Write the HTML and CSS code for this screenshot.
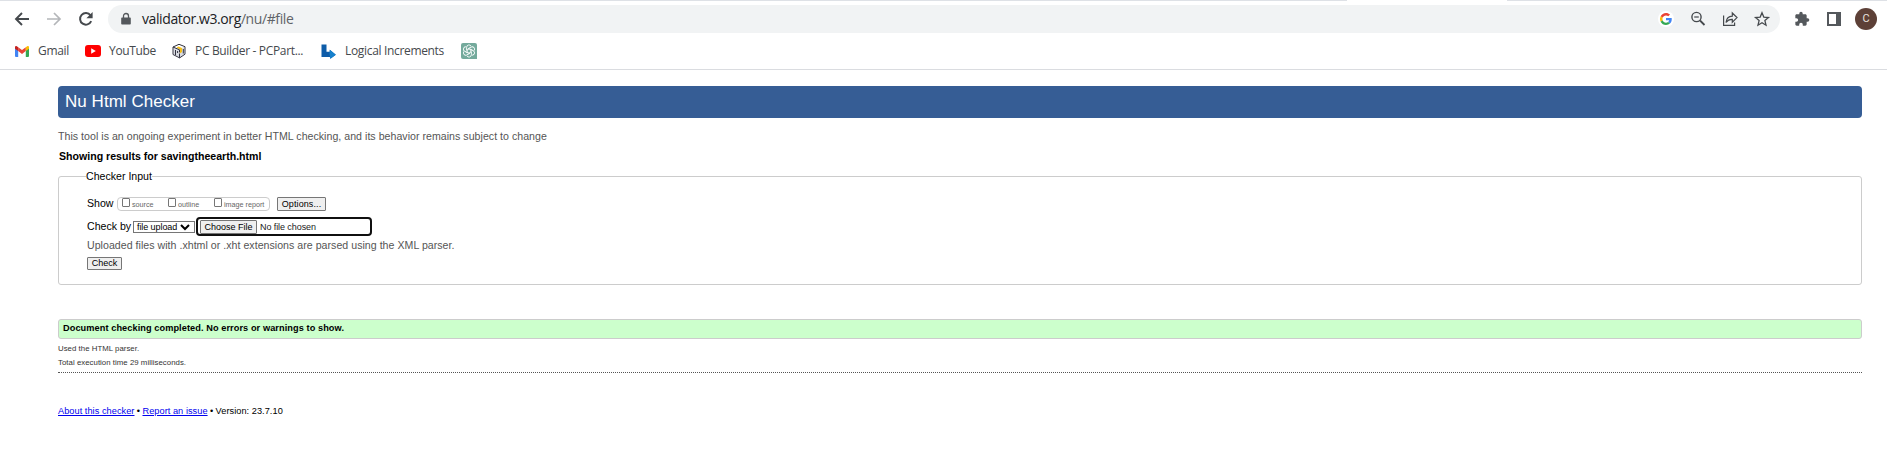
FILE: index.html
```html
<!DOCTYPE html>
<html lang="en">
<head>
<meta charset="utf-8">
<title>Nu Html Checker</title>
<link rel="stylesheet" href="styles.css">
</head>
<body>
<div class="tabs"><span class="active-tab"></span></div>
<div class="toolbar">
  <svg class="nav" viewBox="0 0 16 16"><path d="M15 8H2.5M8 2L2 8l6 6" fill="none" stroke="#45494d" stroke-width="1.9"/></svg>
  <svg class="nav" viewBox="0 0 16 16"><path d="M1 8h12.5M8 2l6 6-6 6" fill="none" stroke="#b4b6b9" stroke-width="1.7"/></svg>
  <svg class="nav" viewBox="0 0 16 16"><path d="M13.2 10.2A5.8 5.8 0 1 1 12.5 4.300" fill="none" stroke="#45494d" stroke-width="2"/><path d="M14.600 1v6.200H8.400z" fill="#45494d"/></svg>
  <div class="omnibox">
    <svg class="lock" viewBox="0 0 10 12"><path d="M1 4.500h8a.8.8 0 0 1 .8.800v5.400a.8.8 0 0 1-.8.800H1a.8.8 0 0 1-.8-.8V5.300a.8.8 0 0 1 .8-.8z" fill="#54585c"/><path d="M2.500 5V3a2.500 2.500 0 0 1 5 0v2" fill="none" stroke="#54585c" stroke-width="1.300"/></svg>
    <span class="url">validator.w3.org<span class="path">/nu/#file</span></span>
    <span class="google"><svg viewBox="0 0 48 48"><path fill="#ea4335" d="M24 9.500c3.500 0 6.700 1.200 9.200 3.600l6.900-6.900C35.900 2.400 30.500 0 24 0 14.600 0 6.500 5.400 2.600 13.200l8 6.200C12.400 13.700 17.700 9.500 24 9.500z"/><path fill="#4285f4" d="M47 24.600c0-1.600-.2-3.100-.4-4.600H24v9h12.900c-.6 3-2.200 5.500-4.700 7.200l7.700 6C44.400 38 47 31.800 47 24.600z"/><path fill="#fbbc05" d="M10.500 28.600a14.500 14.500 0 0 1 0-9.200l-8-6.200a24 24 0 0 0 0 21.600z"/><path fill="#34a853" d="M24 48c6.500 0 11.900-2.100 15.900-5.800l-7.700-6c-2.200 1.500-4.900 2.300-8.200 2.300-6.300 0-11.600-4.200-13.500-9.900l-8 6.200C6.500 42.600 14.600 48 24 48z"/></svg></span>
    <svg class="action" viewBox="0 0 16 16"><g fill="none" stroke="#45494d"><circle cx="6.500" cy="6" r="4.600" stroke-width="1.400"/><path d="M10 9.500l4.500 4.500" stroke-width="1.800"/><path d="M4.200 6h4.600" stroke-width="1.200"/></g></svg>
    <svg class="action" viewBox="0 0 16 16"><g fill="none" stroke="#45494d" stroke-width="1.200"><path d="M1.600 4.500v9.900h11v-2.800"/><path d="M4 11.500c.5-4.200 3-6.200 6.300-6.300V2l4.700 4.600-4.700 4.600V8.300C7.500 8.200 5.500 9.300 4 11.500z"/></g></svg>
    <svg class="action" viewBox="0 0 16 16"><path d="M8 1.800l1.800 4.300 4.700.4-3.600 3.100 1.100 4.600L8 11.700l-4 2.500 1.100-4.600-3.600-3.100 4.700-.4z" fill="none" stroke="#45494d" stroke-width="1.300"/></svg>
  </div>
  <svg class="ext" viewBox="0 0 24 24"><path fill="#54585c" d="M20.500 11H19V7c0-1.100-.9-2-2-2h-4V3.500a2.500 2.500 0 0 0-5 0V5H4c-1.100 0-2 .9-2 2v3.800h1.500a2.700 2.700 0 0 1 0 5.400H2V20c0 1.100.9 2 2 2h3.800v-1.500a2.700 2.700 0 0 1 5.400 0V22H17c1.100 0 2-.9 2-2v-4h1.500a2.500 2.500 0 0 0 0-5z"/></svg>
  <span class="panel"></span>
  <span class="avatar">C</span>
</div>
<div class="bookmarks">
  <svg class="gmail" viewBox="0 0 14 11"><path fill="#4285f4" d="M0 1.500L3.200 4v7H1a1 1 0 0 1-1-1z"/><path fill="#34a853" d="M14 1.500L10.800 4v7H13a1 1 0 0 0 1-1z"/><path fill="#ea4335" d="M3.200 1.300L7 4.100l3.800-2.800v3.800L7 8 3.200 5.100z"/><path fill="#c5221f" d="M0 1.600C0 0 1.500-.3 2.500.7l.7.600v3.800L0 2.800z"/><path fill="#fbbc04" d="M14 1.600c0-1.600-1.500-1.900-2.500-.9l-.7.600v3.800L14 2.800z"/></svg>
  <span class="bm bm-gmail">Gmail</span>
  <svg class="youtube" viewBox="0 0 16 12"><rect width="16" height="12" rx="3" fill="#f00"/><path d="M6.200 3.300v5.400L10.800 6z" fill="#fff"/></svg>
  <span class="bm bm-yt">YouTube</span>
  <svg class="pcpp" viewBox="0 0 16 16"><path fill="#d9dbe2" d="M8 1.500l5.500 2.100v7.300L8.600 14.500 2.500 11.300V4z"/><path fill="#fff" d="M2.500 4.200L8 1.600l5.500 2-5 3z"/><path fill="#f5c018" d="M5.500 4.500l2-1 3.500 1.600v4l-2.200 1.400V6.600z"/><g fill="none" stroke="#32323f" stroke-width="1" stroke-linejoin="round"><path d="M8 1.300l6 2.400v7.500L8.600 14.900 2 11.500V4z"/><path d="M8.500 10.500v4.400M2 4l6.500 2.800v2.500M4.500 7v5M6.600 8v2M12.300 6v4.500"/></g></svg>
  <span class="bm bm-pc">PC Builder - PCPart...</span>
  <svg class="logical" viewBox="0 0 15 15"><path d="M.5.500h5v7.300h3.300V5.700l6 5-5.400 4-.6-1.700H.5z" fill="#0d5ca8"/><path d="M8.800 5.700l6 5-5.400 4-.9-5z" fill="#1680cc"/></svg>
  <span class="bm bm-li">Logical Increments</span>
  <svg class="gpt" viewBox="0 0 16 16"><path d="M2 0h12a2 2 0 0 1 2 2v14H2a2 2 0 0 1-2-2V2a2 2 0 0 1 2-2z" fill="#74aa9c"/><g fill="none" stroke="#fff" stroke-width=".9"><path id="petal" d="M8 5.900L5.600 7.200V4.300a2.400 2.400 0 0 1 4.500-1.100"/><use href="#petal" transform="rotate(60 8 8)"/><use href="#petal" transform="rotate(120 8 8)"/><use href="#petal" transform="rotate(180 8 8)"/><use href="#petal" transform="rotate(240 8 8)"/><use href="#petal" transform="rotate(300 8 8)"/></g></svg>
</div>
<main class="page">
  <h1 class="banner"><span>Nu Html Checker</span></h1>
  <p class="intro">This tool is an ongoing experiment in better HTML checking, and its behavior remains subject to change</p>
  <h2 class="results">Showing results for savingtheearth.html</h2>
  <section class="input-box">
    <div class="legend"><span>Checker Input</span></div>
    <div class="show-row">
      <span class="show-label">Show</span>
      <span class="checks">
        <label class="check"><i class="tick"></i><span>source</span></label>
        <label class="check"><i class="tick"></i><span>outline</span></label>
        <label class="check"><i class="tick"></i><span>image report</span></label>
      </span>
      <button class="btn options">Options...</button>
    </div>
    <div class="by-row">
      <span class="by-label">Check by</span>
      <span class="select">file upload<svg viewBox="0 0 10 6"><path d="M1 1l4 4 4-4" fill="none" stroke="#000" stroke-width="2"/></svg></span>
      <span class="file"><button class="btn choose">Choose File</button><span class="none">No file chosen</span></span>
    </div>
    <p class="hint">Uploaded files with .xhtml or .xht extensions are parsed using the XML parser.</p>
    <button class="btn submit">Check</button>
  </section>
  <div class="success"><span>Document checking completed. No errors or warnings to show.</span></div>
  <p class="stat used">Used the HTML parser.</p>
  <p class="stat time">Total execution time 29 milliseconds.</p>
  <hr class="rule">
  <footer class="foot"><a class="about" href="#">About this checker</a><span class="dot">•</span><a class="report" href="#">Report an issue</a><span class="dot">•</span><span>Version: 23.7.10</span></footer>
</main>
</body>
</html>
```
FILE: styles.css
```css
* { box-sizing: border-box; }
body { margin: 0; background: #fff; color: #000; font-family: "Liberation Sans", Arial, sans-serif; overflow: hidden; }
svg { display: block; flex: none; overflow: visible; }
p, h1, h2 { margin: 0; white-space: nowrap; }

.tabs { height: 1px; background: #dee1e6; padding-left: 1347px; }
.active-tab { display: block; width: 160px; height: 1px; background: #fff; }
.toolbar { height: 36px; display: flex; align-items: center; padding: 0 10px 0 14px; }
.nav { width: 16px; height: 16px; margin-right: 16px; }
.omnibox { width: 1672px; height: 28px; margin-left: -2px; border-radius: 14px; background: #f1f3f4; display: flex; align-items: center; padding: 0 10px 0 13px; }
.lock { width: 10px; height: 12px; margin-right: 11px; }
.url { font: 14px/20px "Open Sans", sans-serif; letter-spacing: -0.4px; color: #202124; white-space: nowrap; }
.path { color: #5f6368; }
.google { width: 16px; height: 16px; margin-left: auto; border-radius: 50%; background: #fff; display: flex; align-items: center; justify-content: center; }
.google svg { width: 12px; height: 12px; }
.action { width: 16px; height: 16px; margin-left: 16px; }
.ext { width: 16px; height: 16px; margin-left: 14px; }
.panel { width: 14px; height: 14px; margin-left: 17px; border: 2px solid #54585c; border-right-width: 5px; }
.avatar { width: 22px; height: 22px; margin-left: 14px; border-radius: 50%; background: #5d4037; color: #e8e0dd; font: 11px/22px Roboto, sans-serif; text-align: center; }
.bookmarks { height: 33px; border-bottom: 1px solid #dadce0; display: flex; align-items: center; padding: 0 0 4px 15px; }
.bm { font: 12px/18px "Open Sans", sans-serif; letter-spacing: -0.33px; color: #45494d; white-space: nowrap; }
.gmail { width: 14px; height: 11px; margin-right: 9px; }
.bm-gmail { width: 47px; }
.youtube { width: 16px; height: 12px; margin-right: 8px; }
.bm-yt { width: 62px; }
.pcpp { width: 16px; height: 16px; margin-right: 8px; }
.bm-pc { width: 126px; }
.logical { width: 15px; height: 15px; margin-right: 9px; }
.bm-li { width: 116px; }
.gpt { width: 16px; height: 16px; }

.page { padding: 16px 25px 0 58px; }
.banner { height: 32px; border-radius: 4px; background: #365d95; color: #fff; font-size: 17px; font-weight: 400; line-height: 31px; padding-left: 7px; letter-spacing: 0.04px; }
.intro { height: 20px; margin-top: 8px; line-height: 20px; font-size: 10.6px; letter-spacing: 0.028px; color: #555; }
.results { height: 20px; line-height: 20px; font-size: 10.6px; padding-left: 1px; }
.input-box { height: 109px; margin-top: 10px; border: 1px solid #ccc; border-radius: 3px; padding-left: 28px; }
.legend { height: 14px; margin-top: -8px; line-height: 14px; font-size: 10.6px; }
.legend span { display: inline-block; background: #fff; margin-left: -1px; }
.show-row { height: 14px; margin-top: 14px; display: flex; align-items: center; }
.show-label { width: 30px; font-size: 10.6px; line-height: 14px; margin-top: -2px; }
.checks { width: 153px; height: 14px; border: 1px solid #ccc; border-radius: 4px; display: flex; padding-left: 4px; font-size: 7.2px; color: #666; }
.check { width: 46px; height: 12px; flex: none; display: flex; white-space: nowrap; }
.check span { line-height: 14px; margin-left: 2px; }
.tick { width: 8px; height: 9px; border: 1px solid #767676; border-radius: 1px; background: #fff; flex: none; }
.btn { border: 1px solid #767676; border-radius: 1px; background: #efefef; color: #000; padding: 0; font-family: "Liberation Sans", Arial, sans-serif; font-size: 9px; white-space: nowrap; display: block; text-align: center; }
.options { width: 49px; height: 14px; margin-left: 7px; line-height: 12px; letter-spacing: 0.1px; }
.by-row { height: 19px; margin-top: 6px; display: flex; align-items: center; }
.by-label { width: 46px; font-size: 10.6px; line-height: 14px; margin-top: -2px; white-space: nowrap; }
.select { width: 62px; height: 12px; border: 1px solid #767676; display: flex; align-items: center; padding-left: 3px; font-size: 9px; letter-spacing: -0.08px; line-height: 10px; white-space: nowrap; }
.select svg { width: 10px; height: 6px; margin-left: 3px; }
.file { width: 176px; height: 19px; margin-left: 1px; border: 2px solid #101010; border-radius: 4px; display: flex; align-items: center; padding-left: 2px; }
.choose { width: 57px; height: 14px; line-height: 12px; }
.none { font-size: 9px; letter-spacing: -0.08px; line-height: 12px; margin-left: 3px; color: #222; }
.hint { height: 14px; margin-top: 2px; line-height: 14px; font-size: 10.6px; letter-spacing: 0.028px; color: #555; }
.submit { width: 35px; height: 13px; margin-top: 5px; line-height: 11px; }
.success { height: 20px; margin-top: 34px; border: 1px solid #ccc; border-radius: 3px; background: #cfc; font-size: 9.2px; letter-spacing: 0.08px; font-weight: 700; line-height: 17px; padding-left: 4px; }
.stat { height: 14px; line-height: 14px; font-size: 7.8px; letter-spacing: 0.04px; color: #333; }
.used { margin-top: 3px; }
.rule { height: 0; margin: 2px 0 0; border: 0; border-top: 1px dotted #555; }
.foot { margin-top: 31px; height: 14px; display: flex; font-size: 9.2px; letter-spacing: 0.05px; line-height: 14px; white-space: nowrap; }
.foot a { color: #00e; text-decoration: underline; }
.dot { width: 8px; text-align: center; }
```
